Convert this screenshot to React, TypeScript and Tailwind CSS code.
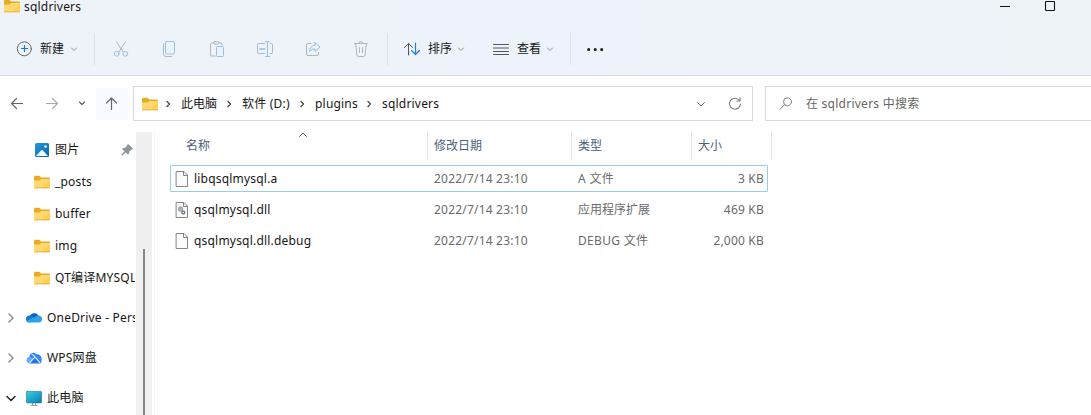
import React from "react";

type IconProps = { children: React.ReactNode; className?: string };

const Icon = ({ children, className = "" }: IconProps) => (
  <svg
    viewBox="0 0 16 16"
    className={`h-4 w-4 shrink-0 ${className}`}
    fill="none"
    stroke="currentColor"
    strokeLinecap="round"
    strokeLinejoin="round"
  >
    {children}
  </svg>
);

const Folder = () => (
  <Icon>
    <path d="M0 3q0-1.200 1.200-1.200h4l2 1.700h7.600q1.200 0 1.200 1.200V8H0z" fill="#e6ac22" stroke="none" />
    <path d="M0 6.400h5.400l1.900-1.500H16v8.200q0 1-1 1H1q-1 0-1-1z" fill="#ffd970" stroke="none" />
    <path d="M8 14.100 16 6v7.100q0 1-1 1z" fill="#ffcf52" stroke="none" />
    <path d="M.600 13.900h14.800" stroke="#e2a72e" strokeWidth=".8" />
  </Icon>
);

const Down = ({ className = "" }: { className?: string }) => (
  <Icon className={className}>
    <path d="m5.500 7 2.500 2.500L10.500 7" />
  </Icon>
);

const Crumb = () => (
  <Icon className="text-[#444]">
    <path d="m7 5.500 2.500 2.500L7 10.500" strokeWidth="1.300" />
  </Icon>
);

const Expand = ({ open = false }: { open?: boolean }) => (
  <Icon className={open ? "text-[#222]" : "text-[#8a8a8a]"}>
    {open ? <path d="m4 6.500 4 4 4-4" strokeWidth="1.500" /> : <path d="m6 4 4 4-4 4" strokeWidth="1.400" />}
  </Icon>
);

const Divider = () => <div className="h-8 w-px shrink-0 bg-[#dde2e8]" />;

const Page = ({ gears = false }: { gears?: boolean }) => (
  <Icon className="text-[#858585]">
    <path d="M2.500 .500h7.500l3.500 3.500v11.500h-11z" fill="#fafafa" strokeLinejoin="miter" />
    <path d="M9.500 .500v4h4" strokeLinejoin="miter" />
    {gears && (
      <>
        <circle cx="6.500" cy="7" r="1.900" fill="#b4b9bd" stroke="#a1a8ad" strokeWidth="1.600" strokeDasharray="1.200 .4" />
        <circle cx="9.300" cy="10.500" r="1.400" stroke="#707a82" strokeWidth="1.400" strokeDasharray="1 .4" />
      </>
    )}
  </Icon>
);

const Picture = () => (
  <Icon>
    <defs>
      <linearGradient id="photo" x1="0" y1="0" x2="1" y2="1">
        <stop stopColor="#2599e0" />
        <stop offset="1" stopColor="#0762b3" />
      </linearGradient>
    </defs>
    <rect x="1" y="1" width="14" height="14" rx="1.500" fill="url(#photo)" stroke="none" />
    <path d="m2 14 5-5.600q1-.9 2 0L14 14z" fill="#f4fbff" stroke="none" />
    <circle cx="11.500" cy="4.500" r="1.300" fill="#fff" stroke="none" />
  </Icon>
);

const OneDrive = () => (
  <Icon className="-mt-[2px]">
    <path d="M3.500 8a5 5 0 0 1 9-1.500l-4 4.500z" fill="#0a60b8" stroke="none" />
    <path d="M3.500 6.500q2-.5 4 1L12 11l-8.500 2.500A3.500 3.500 0 0 1 3.500 6.500" fill="#1279cf" stroke="none" />
    <path d="M8.500 8q2-2 4-1.500A3.500 3.500 0 0 1 12.500 13.500h-9q-1.700 0-2.700-1.500z" fill="#2aa3e8" stroke="none" />
  </Icon>
);

const WpsCloud = () => (
  <Icon className="-mt-px">
    <path d="M3.200 6.500a4.300 4.300 0 0 1 7.500-2.200 4.600 4.600 0 0 1 5 4.700 3.800 3.800 0 0 1-3.500 4.500z" fill="#3187f7" stroke="none" />
    <path d="M3 6.800A3.500 3.500 0 0 0 3 13.500h1.500L8 9z" fill="#63aaff" stroke="none" />
    <path d="M2.500 13.500 7.500 8q1.500-1.500 3 0l5 4.500q-1 1-2.500 1z" fill="#2674ed" stroke="none" />
    <path d="m3.500 13.200 4-4.800q1.400-1.200 2.800 0l3.400 4M6 4.500q2 .3 3 2.500" stroke="#e9f5ff" strokeWidth="1.100" />
  </Icon>
);

const Computer = () => (
  <Icon>
    <defs>
      <linearGradient id="screen" x1="0" y1="0" x2="1" y2="1">
        <stop stopColor="#35d2dd" />
        <stop offset="1" stopColor="#087bb9" />
      </linearGradient>
    </defs>
    <rect x=".400" y="1.400" width="15.200" height="11.500" rx=".8" fill="url(#screen)" stroke="#36779b" strokeWidth=".7" />
    <path d="M6.500 13v2m3-2v2M4.500 15.400h7" stroke="#8d9499" strokeLinecap="butt" />
  </Icon>
);

const Pin = () => (
  <Icon className="text-[#8a959e]">
    <path
      d="m9.800 3 3.700 3.700-.9.900-.7-.1-2.200 2.200.1 1.700-.8.800-2.300-2.300L3 13.300l-.3-.3 3.200-3.700-2.300-2.300.8-.8 1.700.1 2.300-2.200-.1-.6z"
      fill="currentColor"
    />
  </Icon>
);

const quick = [
  { name: "图片", icon: <Picture />, pin: true },
  { name: "_posts", icon: <Folder /> },
  { name: "buffer", icon: <Folder /> },
  { name: "img", icon: <Folder /> },
  { name: "QT编译MYSQL", icon: <Folder /> },
];

const roots = [
  { name: "OneDrive - Pers", icon: <OneDrive />, open: false },
  { name: "WPS网盘", icon: <WpsCloud />, open: false },
  { name: "此电脑", icon: <Computer />, open: true },
];

const files = [
  { name: "libqsqlmysql.a", type: "A 文件", size: "3 KB", selected: true, gears: false },
  { name: "qsqlmysql.dll", type: "应用程序扩展", size: "469 KB", selected: false, gears: true },
  { name: "qsqlmysql.dll.debug", type: "DEBUG 文件", size: "2,000 KB", selected: false, gears: false },
];

export default function App() {
  return (
    <div className="flex h-[415px] w-[1091px] flex-col overflow-hidden bg-white font-['Noto_Sans','Noto_Sans_CJK_SC',sans-serif] text-[12px] leading-4 tracking-[0.2px] whitespace-nowrap text-[#161616]">
      <header className="h-[76px] shrink-0 border-b border-[#d7dade] bg-linear-to-r from-[#edf3f8] via-[#eef3fb] to-[#edf3f7]">
        <div className="flex h-[22px] items-start pl-1">
          <div className="-mt-[2px]"><Folder /></div>
          <span className="ml-1 leading-[14px]">sqldrivers</span>
          <svg className="ml-auto h-[12px] w-[91px]" fill="none" stroke="#111">
            <path d="M0 6.500h10" />
            <rect x="45.500" y="1.500" width="9" height="9" rx=".8" strokeWidth="1.100" />
          </svg>
        </div>
        <div className="flex h-[53px] items-center">
          <div className="flex w-[94px] items-center pl-4 text-[#666]">
            <Icon>
              <circle cx="8.300" cy="7.800" r="7" />
              <path d="M8.500 4.500v6m-3-3h6" stroke="#1975b5" strokeWidth="1.200" />
            </Icon>
            <span className="ml-2 tracking-normal text-[#161616]">新建</span>
            <Down className="ml-[2px] text-[#8a929c]" />
          </div>
          <Divider />
          <div className="ml-[18px] flex gap-8 text-[#b2b6bb]">
            <Icon>
              <path d="m3.500 .800 6.500 10M12.500 .800 6 10.800" />
              <circle cx="3.700" cy="12.800" r="2.400" stroke="#93c2e6" />
              <circle cx="12.300" cy="12.800" r="2.400" stroke="#93c2e6" />
            </Icon>
            <Icon>
              <rect x="4.500" y=".500" width="9" height="12.500" rx="1.500" stroke="#93c2e6" />
              <path d="M2.500 2.500v10.500q0 2.500 2.500 2.500h5.500" stroke="#a6bccd" />
            </Icon>
            <Icon>
              <path d="M4.500 2h-2q-1 0-1 1v11q0 1 1 1h4M10 2h2q1 0 1 1v1" />
              <rect x="4.500" y=".600" width="5.500" height="2.400" rx="1.200" />
              <rect x="7.500" y="5.500" width="7" height="10" rx="1" stroke="#93c2e6" />
            </Icon>
            <Icon>
              <path d="M8 2.500H1.500q-1 0-1 1v8q0 1 1 1H8M13 2.500h1.500q1 0 1 1v8q0 1-1 1H13" />
              <path d="M8.500 .500h4M8.500 15.500h4M10.500 .500v15" stroke="#93c2e6" />
              <path d="M2.800 8h5" stroke="#93c2e6" strokeWidth="1.600" />
            </Icon>
            <Icon>
              <path d="M6 2.500H3q-1.500 0-1.500 1.500v9q0 1.500 1.500 1.500h9q1.500 0 1.500-1.500v-1.500" />
              <path d="M10 1.500 15 6l-5 4.500V8Q6.500 7.500 4.500 10.500 5 4.500 10 4z" stroke="#93c2e6" />
            </Icon>
            <Icon>
              <path d="M1.500 2.500h13M6 2.500q0-2 2-2t2 2M2.700 3l1.200 11q.1 1.500 1.600 1.500h5q1.500 0 1.600-1.500L13.300 3M6.500 6.500v5M9.500 6.500v5" />
            </Icon>
          </div>
          <div className="ml-[18px] flex h-8 w-[183px] items-center border-l border-[#dde2e8] pl-4 text-[#555]">
            <Icon>
              <path d="M4.500 14V2.500M.500 6.500l4-4 4 4" />
              <path d="M11.500 2v11.500m-4-4 4 4 4-4" stroke="#1f82d6" strokeWidth="1.200" />
            </Icon>
            <span className="ml-2 tracking-normal text-[#161616]">排序</span>
            <Down className="ml-[1px] text-[#8a929c]" />
            <Icon className="ml-6">
              <path d="M.500 3.500h15m-15 3.500h15m-15 3.500h15m-15 3h15" />
            </Icon>
            <span className="ml-2 tracking-normal text-[#161616]">查看</span>
            <Down className="ml-px text-[#8a929c]" />
          </div>
          <Divider />
          <Icon className="ml-4 overflow-visible text-[#171717]">
            <path d="M1.700 8.500h.01M8.200 8.500h.01M14.700 8.500h.01" strokeWidth="3" />
          </Icon>
        </div>
      </header>

      <nav className="flex h-[55px] shrink-0 items-start pt-[10px]">
        <div className="flex h-[35px] w-[133px] items-center pl-[9px] text-[#666]">
          <Icon>
            <path d="M13.500 7.500H2.500m5-5-5 5 5 5" strokeWidth="1.200" />
          </Icon>
          <Icon className="ml-[19px] text-[#aaa]">
            <path d="M2.500 7.500h11m-5-5 5 5-5 5" strokeWidth="1.200" />
          </Icon>
          <Icon className="ml-[14px]">
            <path d="m5.500 6 2.500 2.500L10.500 6" strokeWidth="1.300" />
          </Icon>
          <div className="ml-[6px] flex h-8 w-8 items-center justify-center bg-[#f7fafe]">
            <Icon>
              <path d="M7.500 13.500V2m-5 5 5-5 5 5" strokeWidth="1.200" />
            </Icon>
          </div>
        </div>
        <div className="flex h-[35px] w-[620px] items-center border border-[#d9d9d9] pr-[9px] pl-2">
          <Folder />
          <div className="ml-[2px] flex items-center">
            <Crumb />
            <span className="ml-[5px] w-[40px] tracking-normal">此电脑</span>
            <Crumb />
            <span className="ml-[5px] w-[52px]">软件 (D:)</span>
            <Crumb />
            <span className="ml-[5px] w-[46px]">plugins</span>
            <Crumb />
            <span className="ml-[5px]">sqldrivers</span>
          </div>
          <Icon className="ml-auto text-[#666]">
            <path d="m4.500 6.500 3.500 3.500 3.500-3.500" />
          </Icon>
          <Icon className="ml-[18px] text-[#808080]">
            <path d="M12.500 4.500A5.500 5.500 0 1 0 13.500 8M13 1.800v3.200H9.800" strokeWidth="1.100" />
          </Icon>
        </div>
        <div className="ml-3 flex h-[35px] flex-1 items-center border border-r-0 border-[#d9d9d9] pl-3 text-[#666]">
          <Icon className="text-[#858585]">
            <circle cx="9.500" cy="5.800" r="4" />
            <path d="m6.500 8.800-4.500 4.500" />
          </Icon>
          <span className="ml-3 tracking-[0.25px]">在 sqldrivers 中搜索</span>
        </div>
      </nav>

      <main className="flex min-h-0 flex-1">
        <aside className="w-[135px] shrink-0 overflow-hidden pt-[3px]">
          {quick.map((q) => (
            <div key={q.name} className="flex h-8 items-center pl-[34px]">
              {q.icon}
              <span className="ml-[5px]">{q.name}</span>
              {q.pin && <div className="ml-auto"><Pin /></div>}
            </div>
          ))}
          <div className="mt-1">
            {roots.map((r) => (
              <div key={r.name} className="flex h-10 items-center pl-[3px]">
                <Expand open={r.open} />
                <div className="ml-[7px]">{r.icon}</div>
                <span className="ml-[5px]">{r.name}</span>
              </div>
            ))}
          </div>
        </aside>
        <div className="mt-px ml-px flex w-4 shrink-0 flex-col items-center bg-[#f0f0f0] pt-[117px]">
          <div className="w-[2px] flex-1 bg-[#858585]" />
        </div>
        <div className="ml-[2px] w-px bg-[#f6f6f6]" />

        <section className="ml-[15px] w-[602px]">
          <div className="flex h-[29px] items-center tracking-normal text-[#4c607a]">
            <div className="flex w-[257px] items-center pl-4">
              <span>名称</span>
              <Icon className="mb-5 ml-[85px] text-[#666]">
                <path d="m4.500 8.500 3.500-3.500L11.500 8.500" />
              </Icon>
            </div>
            <div className="flex h-7 w-36 items-center border-l border-[#e5e5e5] pl-[6px]">修改日期</div>
            <div className="flex h-7 w-[120px] items-center border-l border-[#e5e5e5] pl-[6px]">类型</div>
            <div className="flex h-7 w-[81px] items-center border-x border-[#e5e5e5] pl-[6px]">大小</div>
          </div>
          <div className="mt-[3px]">
            {files.map((f) => (
              <div key={f.name} className="flex h-[31px] w-[598px] items-center text-[#6b6b6b]">
                <div
                  className={`flex h-[27px] w-full items-center rounded-[1px] border px-[3px] ${
                    f.selected ? "border-[#99cbea]" : "border-transparent"
                  }`}
                >
                  <Page gears={f.gears} />
                  <span className="ml-1 w-[240px] text-[#161616]">{f.name}</span>
                  <span className="w-36">2022/7/14 23:10</span>
                  <span className={/[A-Z]/.test(f.type) ? "tracking-[0.3px]" : "tracking-normal"}>{f.type}</span>
                  <span className="ml-auto">{f.size}</span>
                </div>
              </div>
            ))}
          </div>
        </section>
      </main>
    </div>
  );
}
